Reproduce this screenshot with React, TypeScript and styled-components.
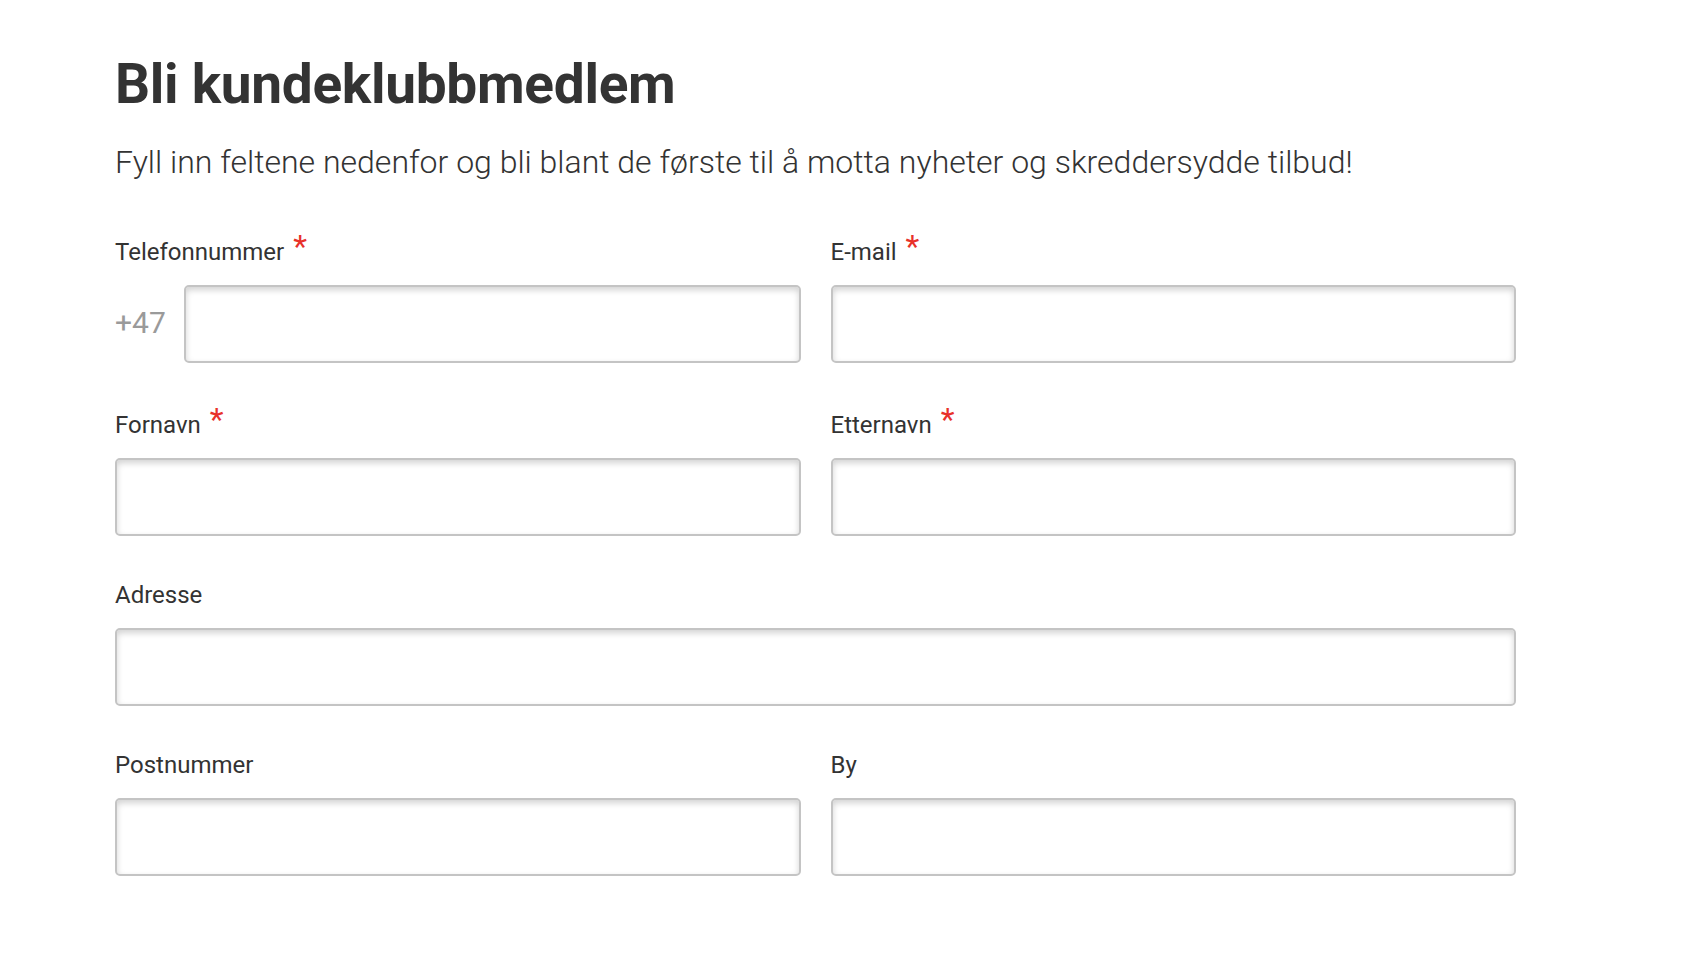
import React from "react";
import styled, { createGlobalStyle } from "styled-components";

const GlobalStyle = createGlobalStyle`
  html, body {
    margin: 0;
    padding: 0;
    background: #ffffff;
    font-family: Roboto, "Liberation Sans", Arial, sans-serif;
    color: #333333;
  }
  * { box-sizing: border-box; }
`;

const Page = styled.main`
  padding: 52px 0 60px 115px;
  width: 1516px;
`;

const Title = styled.h1`
  margin: 0;
  font-size: 55px;
  line-height: 64px;
  font-weight: 700;
  color: #333333;
  letter-spacing: -0.3px;
`;

const Intro = styled.p`
  margin: 24px 0 0 0;
  font-size: 32px;
  line-height: 44px;
  font-weight: 300;
  color: #333333;
`;

const Form = styled.form`
  margin-top: 50px;
  display: grid;
  grid-template-columns: 1fr 1fr;
  column-gap: 30px;
  row-gap: 44px;
`;

const Field = styled.div<{ $full?: boolean }>`
  display: flex;
  flex-direction: column;
  gap: 18px;
  grid-column: ${(p) => (p.$full ? "1 / -1" : "auto")};
`;

const Label = styled.label`
  display: flex;
  align-items: baseline;
  font-size: 24px;
  line-height: 30px;
  font-weight: 400;
  color: #333333;
`;

const Required = styled.span`
  color: #e8312a;
  font-size: 32px;
  margin-left: 9px;
  position: relative;
  top: -3px;
`;

const InputRow = styled.div`
  display: flex;
  align-items: center;
  gap: 19px;
`;

const Prefix = styled.span`
  font-size: 30px;
  font-weight: 400;
  color: #9a9a9a;
  width: 50px;
  flex: none;
  position: relative;
  top: -2px;
`;

const TextInput = styled.input`
  flex: 1 1 auto;
  min-width: 0;
  width: 100%;
  height: 78px;
  min-height: 78px;
  border: 2px solid #c4c4c4;
  border-radius: 5px;
  background: #ffffff;
  box-shadow: inset 0 3px 6px rgba(0, 0, 0, 0.18);
  font-family: inherit;
  font-size: 24px;
  padding: 0 16px;
  outline: none;
`;

type FieldDef = { label: string; required?: boolean; full?: boolean; prefix?: string; type?: string };

const fields: FieldDef[] = [
  { label: "Telefonnummer", required: true, prefix: "+47", type: "tel" },
  { label: "E-mail", required: true, type: "email" },
  { label: "Fornavn", required: true },
  { label: "Etternavn", required: true },
  { label: "Adresse", full: true },
  { label: "Postnummer" },
  { label: "By" },
];

export default function App() {
  return (
    <>
      <GlobalStyle />
      <Page>
        <Title>Bli kundeklubbmedlem</Title>
        <Intro>Fyll inn feltene nedenfor og bli blant de første til å motta nyheter og skreddersydde tilbud!</Intro>
        <Form onSubmit={(e) => e.preventDefault()}>
          {fields.map((f) => (
            <Field key={f.label} $full={f.full}>
              <Label>
                {f.label}
                {f.required && <Required>*</Required>}
              </Label>
              {f.prefix ? (
                <InputRow>
                  <Prefix>{f.prefix}</Prefix>
                  <TextInput type={f.type ?? "text"} aria-label={f.label} />
                </InputRow>
              ) : (
                <TextInput type={f.type ?? "text"} aria-label={f.label} />
              )}
            </Field>
          ))}
        </Form>
      </Page>
    </>
  );
}
